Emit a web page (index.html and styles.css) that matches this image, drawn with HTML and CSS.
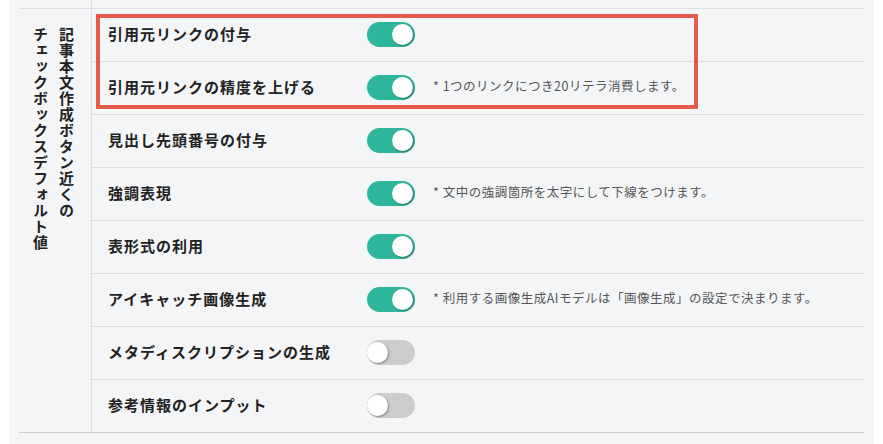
FILE: index.html
```html
<!DOCTYPE html>
<html lang="ja">
<head>
<meta charset="utf-8">
<link rel="stylesheet" href="styles.css">
</head>
<body>
<div class="panel">
  <div class="prev">
    <div class="prev-title"></div>
    <div></div>
  </div>
  <div class="group">
    <div class="group-title"><span>記事本文作成ボタン近くの<br>チェックボックスデフォルト値</span></div>
    <div class="rows">
      <div class="row">
        <div class="label">引用元リンクの付与</div>
        <span class="toggle on"><span class="knob"></span></span>
      </div>
      <div class="row">
        <div class="label">引用元リンクの精度を上げる</div>
        <span class="toggle on"><span class="knob"></span></span>
        <div class="note">* 1つのリンクにつき20リテラ消費します。</div>
      </div>
      <div class="row">
        <div class="label">見出し先頭番号の付与</div>
        <span class="toggle on"><span class="knob"></span></span>
      </div>
      <div class="row">
        <div class="label">強調表現</div>
        <span class="toggle on"><span class="knob"></span></span>
        <div class="note">* 文中の強調箇所を太字にして下線をつけます。</div>
      </div>
      <div class="row">
        <div class="label">表形式の利用</div>
        <span class="toggle on"><span class="knob"></span></span>
      </div>
      <div class="row">
        <div class="label">アイキャッチ画像生成</div>
        <span class="toggle on"><span class="knob"></span></span>
        <div class="note">* 利用する画像生成AIモデルは「画像生成」の設定で決まります。</div>
      </div>
      <div class="row">
        <div class="label">メタディスクリプションの生成</div>
        <span class="toggle"><span class="knob"></span></span>
      </div>
      <div class="row">
        <div class="label">参考情報のインプット</div>
        <span class="toggle"><span class="knob"></span></span>
      </div>
    </div>
  </div>
  <div class="highlight"></div>
</div>
</body>
</html>
```
FILE: styles.css
```css
html, body {
  margin: 0;
  padding: 0;
  background: #ffffff;
}
body {
  font-family: "Noto Sans CJK JP", "Noto Sans", sans-serif;
  color: #222;
}
.panel {
  position: relative;
  margin-left: 9px;
  width: 865px;
  height: 444px;
  box-sizing: border-box;
  padding: 0 10px;
  background: #f4f5f7;
}
.prev {
  display: grid;
  grid-template-columns: 73px 1fr;
  height: 8px;
}
.prev-title {
  border-right: 1px solid #dcdde0;
}
.group {
  display: grid;
  grid-template-columns: 73px 1fr;
  border-top: 1px solid #dcdde0;
  border-bottom: 1px solid #cfd0d3;
}
.group-title {
  border-right: 1px solid #dcdde0;
  padding: 18px 12px 0 8px;
  display: flex;
  justify-content: flex-start;
}
.group-title span {
  writing-mode: vertical-rl;
  font-size: 15px;
  font-weight: 700;
  line-height: 26px;
  letter-spacing: 1px;
  color: #222;
}
.row {
  display: flex;
  align-items: center;
  height: 52px;
  padding-left: 16px;
  border-bottom: 1px solid #dcdde0;
}
.row:last-child {
  border-bottom: none;
}
.label {
  width: 259px;
  flex: none;
  font-size: 15px;
  line-height: 1;
  margin-top: -3px;
  font-weight: 700;
  letter-spacing: 1px;
  color: #222;
}
.toggle {
  position: relative;
  flex: none;
  width: 48px;
  height: 25px;
  border-radius: 13px;
  background: #cccccc;
  margin-top: -2px;
}
.toggle.on {
  background: #2db69b;
}
.knob {
  position: absolute;
  top: 2px;
  left: 0;
  width: 21px;
  height: 21px;
  border-radius: 50%;
  background: #ffffff;
  box-shadow: 1px 1px 2px rgba(0, 0, 0, 0.35);
}
.toggle.on .knob {
  left: auto;
  right: 2px;
}
.note {
  margin-left: 18px;
  font-size: 12.5px;
  line-height: 1;
  margin-top: -3px;
  letter-spacing: 0.5px;
  color: #555;
}
.highlight {
  position: absolute;
  left: 87px;
  top: 14px;
  width: 602px;
  height: 95px;
  box-sizing: border-box;
  border: 4px solid #e65c4b;
}
```
